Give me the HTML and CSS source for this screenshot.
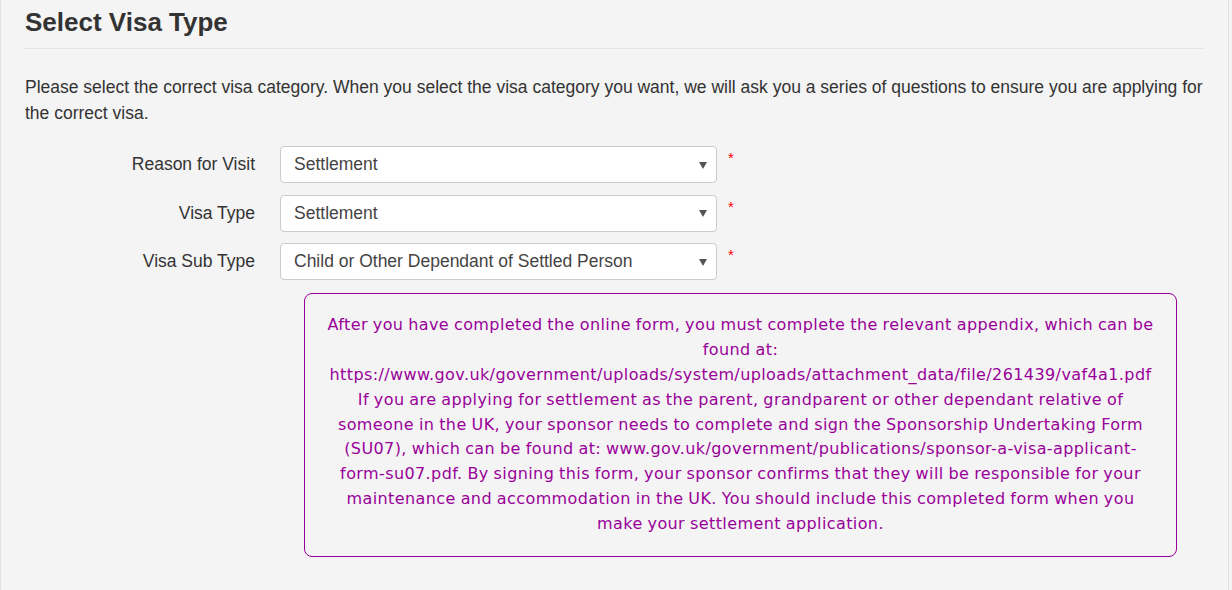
FILE: index.html
```html
<!DOCTYPE html>
<html>
<head>
<meta charset="utf-8">
<link rel="stylesheet" href="styles.css">
</head>
<body>
<div class="page">
  <h1 class="title">Select Visa Type</h1>
  <p class="intro">Please select the correct visa category. When you select the visa category you want, we will ask you a series of questions to ensure you are applying for the correct visa.</p>
  <div class="form">
    <div class="row">
      <label class="label">Reason for Visit</label>
      <div class="select"><span>Settlement</span><span class="arrow"></span></div>
      <span class="req">*</span>
    </div>
    <div class="row">
      <label class="label">Visa Type</label>
      <div class="select"><span>Settlement</span><span class="arrow"></span></div>
      <span class="req">*</span>
    </div>
    <div class="row">
      <label class="label">Visa Sub Type</label>
      <div class="select"><span>Child or Other Dependant of Settled Person</span><span class="arrow"></span></div>
      <span class="req">*</span>
    </div>
  </div>
  <div class="notice">
    After you have completed the online form, you must complete the relevant appendix, which can be<br>
    found at:<br>
    https://www.gov.uk/government/uploads/system/uploads/attachment_data/file/261439/vaf4a1.pdf<br>
    If you are applying for settlement as the parent, grandparent or other dependant relative of<br>
    someone in the UK, your sponsor needs to complete and sign the Sponsorship Undertaking Form<br>
    (SU07), which can be found at: www.gov.uk/government/publications/sponsor-a-visa-applicant-<br>
    form-su07.pdf. By signing this form, your sponsor confirms that they will be responsible for your<br>
    maintenance and accommodation in the UK. You should include this completed form when you<br>
    make your settlement application.
  </div>
</div>
</body>
</html>
```

FILE: styles.css
```css
html, body {
  margin: 0;
  padding: 0;
  background: #f4f4f4;
}
body {
  font-family: "Liberation Sans", Arial, sans-serif;
  color: #333;
  font-size: 17.5px;
}
.page {
  border-left: 1px solid #e2e2e2;
  border-right: 1px solid #e2e2e2;
  width: 1229px;
  min-height: 590px;
  box-sizing: border-box;
  padding: 0 24px 0 24px;
}
.title {
  margin: 0;
  padding: 6px 0 10px 0;
  font-size: 26px;
  line-height: 32px;
  font-weight: bold;
  color: #333;
  border-bottom: 1px solid #e4e4e4;
}
.intro {
  margin: 25px 0 0 0;
  line-height: 26px;
}
.form {
  margin-top: 20px;
  display: flex;
  flex-direction: column;
  gap: 11.5px;
}
.row {
  display: flex;
  align-items: flex-start;
}
.label {
  width: 255px;
  text-align: right;
  line-height: 36px;
  padding-right: 25px;
  box-sizing: border-box;
  flex: none;
}
.select {
  width: 437px;
  height: 37px;
  box-sizing: border-box;
  background: #fff;
  border: 1px solid #ccc;
  border-radius: 4px;
  display: flex;
  align-items: center;
  justify-content: space-between;
  padding: 0 9px 0 13px;
  color: #444;
}
.arrow {
  width: 0;
  height: 0;
  border-left: 4px solid transparent;
  border-right: 4px solid transparent;
  border-top: 7px solid #555;
  margin-top: 1px;
}
.req {
  color: #ff0000;
  margin-left: 11px;
  font-size: 15px;
  line-height: 15px;
  margin-top: 4px;
}
.notice {
  margin: 13px 0 0 279px;
  width: 873px;
  box-sizing: border-box;
  border: 1px solid #990099;
  border-radius: 8px;
  padding: 19px 4px 19px 4px;
  text-align: center;
  color: #990099;
  font-family: "DejaVu Sans", Verdana, sans-serif;
  font-size: 16px;
  letter-spacing: 0.4px;
  word-spacing: -0.6px;
  line-height: 24.875px;
}
```
